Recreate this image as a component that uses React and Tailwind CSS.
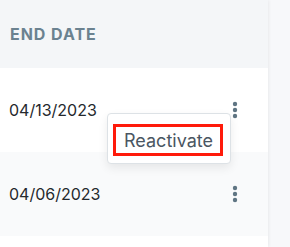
import { useState } from 'react'

const rows = [
  { id: 1, end: '04/13/2023', bg: 'bg-white' },
  { id: 2, end: '04/06/2023', bg: 'bg-[#f9fafb]' },
]

function Kebab() {
  return (
    <svg width="6" height="18" viewBox="0 0 6 18" className="text-[#5f7583]">
      <circle cx="3" cy="3" r="2.2" fill="currentColor" />
      <circle cx="3" cy="9" r="2.2" fill="currentColor" />
      <circle cx="3" cy="15" r="2.2" fill="currentColor" />
    </svg>
  )
}

export default function App() {
  const [openRow] = useState(1)

  return (
    <div className="flex h-[247px] w-[290px] overflow-hidden bg-[#f7f8fa] font-['Inter',sans-serif]">
      <div className="w-[268px] shrink-0 bg-white shadow-[1px_0_3px_rgba(0,0,0,0.06)]">
        {/* Header */}
        <div className="flex h-[68px] items-center bg-[#f4f6f8] px-[10px]">
          <span className="text-[16px] font-bold tracking-[0.06em] text-[#6b8290]">END DATE</span>
        </div>

        {rows.map((row) => (
          <div key={row.id} className={`relative flex h-[84px] items-center justify-between pl-[9px] pr-[28px] ${row.bg}`}>
            <span className="text-[16px] text-[#25292d]">{row.end}</span>
            <button className="flex h-[24px] w-[10px] items-center justify-center">
              <Kebab />
            </button>

            {openRow === row.id && (
              <div className="absolute left-[107px] top-[45px] z-10 flex h-[51px] w-[124px] items-start rounded-[4px] border border-[#dde2e6] bg-white pl-[5px] pt-[10px] shadow-[0_4px_10px_rgba(0,0,0,0.08)]">
                <div className="flex h-[32px] w-[110px] items-center border-[3px] border-[#ff1a0a] pl-[8px] text-[18px] text-[#4a5662]">
                  Reactivate
                </div>
              </div>
            )}
          </div>
        ))}
      </div>
    </div>
  )
}
